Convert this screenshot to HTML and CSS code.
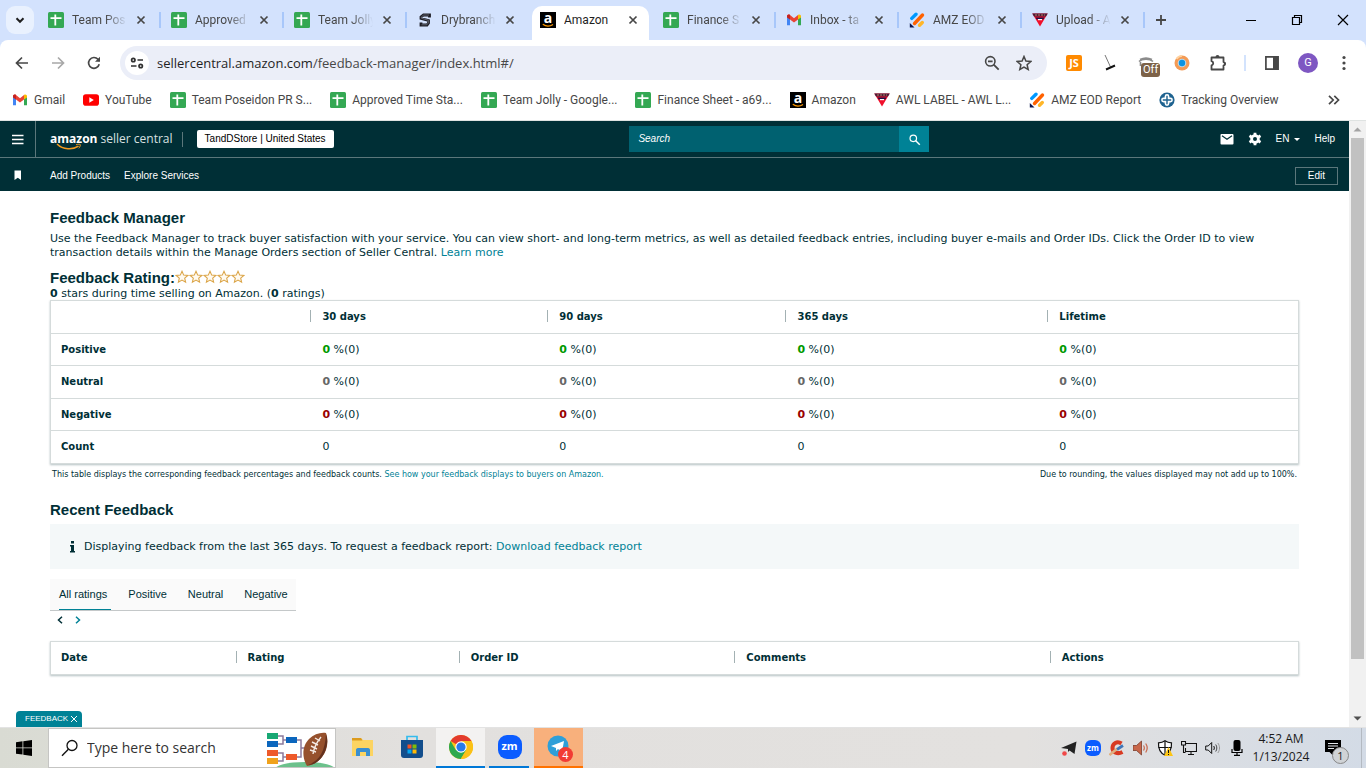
FILE: index.html
```html
<!DOCTYPE html>
<html lang="en">
<head>
  <meta charset="UTF-8" />
  <meta name="viewport" content="width=device-width, initial-scale=1" />
  <title>Amazon</title>
  <link rel="stylesheet" href="styles.css">
</head>
<body>
  <!-- shared icons -->
  <svg class="sprite" aria-hidden="true">
    <symbol id="i-sheet" viewBox="0 0 16 16">
      <rect width="16" height="16" rx="1.5" fill="#34a853"/>
      <path d="M2.5 6.2h11M7.3 2.5v11" stroke="#fff" stroke-width="1.8"/>
    </symbol>
    <symbol id="i-gmail" viewBox="0 0 16 16">
      <path d="M1 4v9.2h3V7z" fill="#4285f4"/>
      <path d="M15 4v9.2h-3V7z" fill="#34a853"/>
      <path d="M1 4.5C1 2.5 3 2 4 3l4 3.2L12 3v4.6L8 10.5 4 7.6z" fill="#ea4335"/>
      <path d="M1 4.2C1 3 2.5 2 4 3v4.6L1 5.4z" fill="#c5221f"/>
      <path d="M12 3c1.5-1 3 0 3 1.3v1.1l-3 2.2z" fill="#fbbc04"/>
    </symbol>
    <symbol id="i-amazon" viewBox="0 0 16 16">
      <rect width="16" height="16" fill="#000"/>
      <text x="8" y="11" text-anchor="middle" class="amazon-a">a</text>
      <path d="M2.8 12.300c3 2.200 7.200 2.200 10.200.2" fill="none" stroke="#f90" stroke-width="1.300"/>
    </symbol>
    <symbol id="i-dry" viewBox="0 0 16 16">
      <path d="M12.500 5.500V3H6.500L4 5v1.500l7.500 2V11L10 13H4v-2.500" fill="none" stroke="#1d1d25" stroke-width="2.800"/>
      <path d="M12 3H6.700L4.300 5v1.200l7 2V11l-1.500 1.800H4.500" fill="none" stroke="#8a8f9c" stroke-width=".6"/>
    </symbol>
    <symbol id="i-jot" viewBox="0 0 16 16">
      <g stroke-width="3.400" stroke-linecap="round">
        <path d="M2.800 6.400 7 2.200" stroke="#0099ff"/>
        <path d="M5.500 11.500 13.500 3" stroke="#ff6100"/>
        <path d="M10.500 13.300 13.300 10.500" stroke="#ffb629"/>
      </g>
      <path d="M.8 11v4.500h4.700z" fill="#0a1551"/>
    </symbol>
    <symbol id="i-awl" viewBox="0 0 16 16">
      <path d="M.3 1.500h15.400L8 14.500z" fill="#f0102c"/>
      <path d="M.3 1.500h15.400L14 4.500H2z" fill="#4b1d3a"/>
      <path d="M3.500 5.500h9l-1 1.800h-7z" fill="#201048"/>
      <path d="M6 7.600h4" stroke="#fff" stroke-width="1.200"/>
      <path d="M3 3h10" stroke="#d9a070" stroke-width=".8" stroke-dasharray="2 1"/>
    </symbol>
    <symbol id="i-x" viewBox="0 0 16 16">
      <path d="m4.500 4.500 7 7m0-7-7 7" fill="none" stroke="currentColor" stroke-width="1.700"/>
    </symbol>
    <symbol id="i-star" viewBox="0 0 14 14">
      <path d="m7 1.300 1.700 3.800 4.100.4-3.100 2.700.9 4L7 10.100l-3.600 2.100.9-4L1.200 5.500l4.100-.4z" fill="#fffaf0" stroke="#dba548" stroke-width="1.100"/>
    </symbol>
    <symbol id="i-search" viewBox="0 0 16 16">
      <circle cx="6.500" cy="6.500" r="4" fill="none" stroke="currentColor" stroke-width="1.500"/>
      <path d="m9.500 9.500 5 5" stroke="currentColor" stroke-width="1.800"/>
    </symbol>
  </svg>

  <!-- browser window -->
  <header class="browser">
    <div class="tabstrip">
      <button class="tab-search" aria-label="Search tabs">
        <svg class="ico" viewBox="0 0 16 16"><path d="m4.500 6.300 3.500 3.500 3.500-3.500" fill="none" stroke="#1f1f1f" stroke-width="2"/></svg>
      </button>
      <div class="tab"><svg class="ico"><use href="#i-sheet"/></svg><span class="tab-title">Team Pos</span><button class="tab-close" aria-label="Close"><svg class="ico"><use href="#i-x"/></svg></button></div>
      <div class="tab"><svg class="ico"><use href="#i-sheet"/></svg><span class="tab-title">Approved</span><button class="tab-close" aria-label="Close"><svg class="ico"><use href="#i-x"/></svg></button></div>
      <div class="tab"><svg class="ico"><use href="#i-sheet"/></svg><span class="tab-title">Team Jolly</span><button class="tab-close" aria-label="Close"><svg class="ico"><use href="#i-x"/></svg></button></div>
      <div class="tab no-line"><svg class="ico"><use href="#i-dry"/></svg><span class="tab-title">Drybranch</span><button class="tab-close" aria-label="Close"><svg class="ico"><use href="#i-x"/></svg></button></div>
      <div class="tab active no-line"><svg class="ico"><use href="#i-amazon"/></svg><span class="tab-title">Amazon</span><button class="tab-close" aria-label="Close"><svg class="ico"><use href="#i-x"/></svg></button></div>
      <div class="tab"><svg class="ico"><use href="#i-sheet"/></svg><span class="tab-title">Finance S</span><button class="tab-close" aria-label="Close"><svg class="ico"><use href="#i-x"/></svg></button></div>
      <div class="tab"><svg class="ico"><use href="#i-gmail"/></svg><span class="tab-title">Inbox - ta</span><button class="tab-close" aria-label="Close"><svg class="ico"><use href="#i-x"/></svg></button></div>
      <div class="tab"><svg class="ico"><use href="#i-jot"/></svg><span class="tab-title">AMZ EOD</span><button class="tab-close" aria-label="Close"><svg class="ico"><use href="#i-x"/></svg></button></div>
      <div class="tab"><svg class="ico"><use href="#i-awl"/></svg><span class="tab-title">Upload - A</span><button class="tab-close" aria-label="Close"><svg class="ico"><use href="#i-x"/></svg></button></div>
      <button class="new-tab" aria-label="New tab"><svg class="ico" viewBox="0 0 16 16"><path d="M8 3v10M3 8h10" stroke="#474747" stroke-width="1.800"/></svg></button>
      <div class="window-buttons">
        <button aria-label="Minimize"><svg class="ico" viewBox="0 0 16 16"><path d="M3 8.500h10" stroke="#000"/></svg></button>
        <button aria-label="Restore"><svg class="ico" viewBox="0 0 16 16"><path d="M3.500 5.500h7v7h-7zM5.500 5.500v-2h7v7h-2" fill="none" stroke="#000" stroke-width="1.200"/></svg></button>
        <button aria-label="Close window"><svg class="ico" viewBox="0 0 16 16"><path d="m3 3 10 10m0-10L3 13" stroke="#000" stroke-width="1.200"/></svg></button>
      </div>
    </div>

    <div class="toolbar">
      <div class="nav-buttons">
        <button aria-label="Back"><svg class="ico" viewBox="0 0 16 16"><path d="M14 8H3M8 2.500 2.500 8 8 13.500" fill="none" stroke="#474747" stroke-width="1.700"/></svg></button>
        <button aria-label="Forward"><svg class="ico" viewBox="0 0 16 16"><path d="M2 8h11M8 2.500 13.500 8 8 13.500" fill="none" stroke="#a8a8a8" stroke-width="1.700"/></svg></button>
        <button aria-label="Reload"><svg class="ico" viewBox="0 0 16 16"><path d="M13.200 9.300A5.400 5.400 0 1 1 12 4.300L13.500 6" fill="none" stroke="#474747" stroke-width="1.700"/><path d="M14 1.700v5H9z" fill="#474747"/></svg></button>
      </div>
      <div class="omnibox">
        <button class="site-info" aria-label="Site information"><svg class="ico" viewBox="0 0 16 16"><g fill="none" stroke="#303030" stroke-width="1.700"><circle cx="4.300" cy="5" r="1.700"/><path d="M8.500 5H14M2 11h5.500"/><circle cx="11.700" cy="11" r="1.700"/></g></svg></button>
        <span class="url">sellercentral.amazon.com<span class="url-path">/feedback-manager/index.html#/</span></span>
        <button aria-label="Zoom"><svg class="ico" viewBox="0 0 16 16"><circle cx="6.300" cy="6.300" r="4.700" fill="none" stroke="#474747" stroke-width="1.600"/><path d="m9.700 9.700 5 5M4 6.300h4.600" stroke="#474747" stroke-width="1.800"/></svg></button>
        <button aria-label="Bookmark this page"><svg class="ico" viewBox="0 0 16 16"><path d="m8 1.500 1.900 4.600 4.900.4-3.700 3.200 1.100 4.800L8 12l-4.200 2.500 1.100-4.800L1.200 6.500l4.900-.4z" fill="none" stroke="#474747" stroke-width="1.500"/></svg></button>
      </div>
      <div class="extensions">
        <button aria-label="Script extension" class="ext-js">JS</button>
        <button aria-label="Cleaner extension"><svg class="ico" viewBox="0 0 16 16"><path d="M3 0 8.500 12" stroke="#777" stroke-width="1"/><path d="m4 14.500 9-4" stroke="#111" stroke-width="2"/></svg></button>
        <button aria-label="Spy extension" class="ext-off"><svg class="ico" viewBox="0 0 16 16"><path d="M1 6.500c3-3 11-3 14 0M2 4.500c4-2 8-2 12 0M2.500 7v4" fill="none" stroke="#8b8b8b" stroke-width="1.600"/></svg><span class="off-badge">Off</span></button>
        <button aria-label="Browser extension"><svg class="ico" viewBox="0 0 16 16"><circle cx="8" cy="8" r="7.500" fill="#f49b55"/><path d="M2.500 4A7 7 0 0 1 8 .8" fill="none" stroke="#ffd2a0" stroke-width="2"/><circle cx="8" cy="8" r="4.300" fill="#b9d8ea"/><circle cx="8" cy="8" r="3.200" fill="#0a93e2"/></svg></button>
        <button aria-label="Extensions" class="ext-all"><svg class="ico ico-18" viewBox="0 0 18 18"><path d="M2.500 3.500h12v4.500a1.800 1.800 0 0 1 0 3.500v4h-12v-4a2.200 2.200 0 0 0 0-4.300z" fill="none" stroke="#474747" stroke-width="1.800" stroke-linejoin="round"/><path d="M6.500 3a2 2 0 0 1 4 0zM15 7.800a2 2 0 0 1 0 4z" fill="#474747"/></svg></button>
        <span class="toolbar-line"></span>
        <button aria-label="Side panel"><svg class="ico" viewBox="0 0 16 16"><path d="M1.900 1.900h12.200v12.200H1.900z" fill="none" stroke="#474747" stroke-width="1.700"/><path d="M9 2h5v12H9z" fill="#474747"/></svg></button>
        <button aria-label="Profile" class="avatar">G</button>
        <button aria-label="Menu"><svg class="ico" viewBox="0 0 16 16"><g fill="#474747"><circle cx="8" cy="2.500" r="1.600"/><circle cx="8" cy="8" r="1.600"/><circle cx="8" cy="13.500" r="1.600"/></g></svg></button>
      </div>
    </div>

    <nav class="bookmarks" aria-label="Bookmarks">
      <a href="#"><svg class="ico"><use href="#i-gmail"/></svg>Gmail</a>
      <a href="#"><svg class="ico" viewBox="0 0 16 16"><rect y="2.300" width="16" height="11.400" rx="2.800" fill="#f00"/><path d="m6.300 5.300 4.500 2.700-4.500 2.700z" fill="#fff"/></svg>YouTube</a>
      <a href="#"><svg class="ico"><use href="#i-sheet"/></svg>Team Poseidon PR S...</a>
      <a href="#"><svg class="ico"><use href="#i-sheet"/></svg>Approved Time Sta...</a>
      <a href="#"><svg class="ico"><use href="#i-sheet"/></svg>Team Jolly - Google...</a>
      <a href="#"><svg class="ico"><use href="#i-sheet"/></svg>Finance Sheet - a69...</a>
      <a href="#"><svg class="ico"><use href="#i-amazon"/></svg>Amazon</a>
      <a href="#"><svg class="ico"><use href="#i-awl"/></svg>AWL LABEL - AWL L...</a>
      <a href="#"><svg class="ico"><use href="#i-jot"/></svg>AMZ EOD Report</a>
      <a href="#"><svg class="ico" viewBox="0 0 16 16"><circle cx="8" cy="8" r="7.600" fill="#1f6390"/><path d="M8 4.500v7M4.500 8h7" stroke="#fff" stroke-width="4.800" stroke-linecap="round"/><path d="M8 3.800v8.400M3.800 8h8.400" stroke="#1f6390" stroke-width="1.400"/></svg>Tracking Overview</a>
      <button class="more-bookmarks" aria-label="More bookmarks"><svg class="ico" viewBox="0 0 16 16"><path d="m3 3.800 4.200 4.200L3 12.200M8.300 3.800l4.200 4.200-4.200 4.200" fill="none" stroke="#474747" stroke-width="1.700"/></svg></button>
    </nav>
  </header>

  <!-- seller central -->
  <div class="viewport">
    <div class="page">
      <header class="site-header">
        <div class="brand">
          <button class="menu-btn" aria-label="Menu"><svg class="ico" viewBox="0 0 16 16"><path d="M2 4.500h11.500M2 8.500h11.500M2 12.500h11.500" stroke="#fff" stroke-width="1.300"/></svg></button>
          <a class="logo" href="#"><b>amazon</b> seller central<svg class="smile" viewBox="0 0 26 8"><path d="M1 1c6 6 16 6 21.500 2.200" fill="none" stroke="#f39b1f" stroke-width="1.500"/><path d="M20 1.800c2-.8 4-.6 4.300-.2.200.5-.3 2.400-1.500 3.700" fill="none" stroke="#f39b1f"/></svg></a>
          <span class="brand-line"></span>
          <button class="store-btn">TandDStore | United States</button>
        </div>
        <form class="search">
          <input type="text" placeholder="Search" aria-label="Search">
          <button type="button" aria-label="Go"><svg class="ico" viewBox="0 0 16 16"><use href="#i-search"/></svg></button>
        </form>
        <div class="account">
          <a href="#" aria-label="Messages"><svg class="ico ico-14" viewBox="0 0 14 14"><rect x=".5" y="2" width="13" height="10.500" rx="1" fill="#fff"/><path d="m2 3.800 5 3.400 5-3.400" fill="none" stroke="#002f36" stroke-width="1.200"/></svg></a>
          <a href="#" aria-label="Settings"><svg class="ico ico-14" viewBox="0 0 14 14"><circle cx="7" cy="7" r="3.400" fill="none" stroke="#fff" stroke-width="2.800"/><path d="M7 .7v2.400M7 10.900v2.400M1.500 3.800l2.200 1.300M10.300 8.900l2.200 1.300M1.500 10.200l2.200-1.300M10.300 5.100l2.200-1.300" stroke="#fff" stroke-width="2.800"/></svg></a>
          <button class="lang">EN<span class="caret"></span></button>
          <a href="#">Help</a>
        </div>
      </header>
      <nav class="subnav" aria-label="Favorites">
        <svg class="ico bookmark" viewBox="0 0 16 16"><path d="M5.500 2.500H12v9.500L8.800 9.800 5.500 12z" fill="#fff"/></svg>
        <a href="#">Add Products</a>
        <a href="#">Explore Services</a>
        <button class="edit-btn">Edit</button>
      </nav>

      <main class="content">
        <h1>Feedback Manager</h1>
        <p class="intro">Use the Feedback Manager to track buyer satisfaction with your service. You can view short- and long-term metrics, as well as detailed feedback entries, including buyer e-mails and Order IDs. Click the Order ID to view transaction details within the Manage Orders section of Seller Central. <a href="#">Learn more</a></p>

        <div class="rating">
          <h2>Feedback Rating:</h2>
          <span class="stars" role="img" aria-label="0 out of 5 stars">
            <svg><use href="#i-star"/></svg><svg><use href="#i-star"/></svg><svg><use href="#i-star"/></svg><svg><use href="#i-star"/></svg><svg><use href="#i-star"/></svg>
          </span>
        </div>
        <p class="rating-text"><b>0</b> stars during time selling on Amazon. (<b>0</b> ratings)</p>

        <table class="card-table summary">
          <colgroup><col class="s1"><col class="s2"><col class="s3"><col class="s4"><col class="s5"></colgroup>
          <thead>
            <tr><td></td><th scope="col">30 days</th><th scope="col">90 days</th><th scope="col">365 days</th><th scope="col">Lifetime</th></tr>
          </thead>
          <tbody>
            <tr class="positive"><th scope="row">Positive</th><td><b>0</b> %(0)</td><td><b>0</b> %(0)</td><td><b>0</b> %(0)</td><td><b>0</b> %(0)</td></tr>
            <tr class="neutral"><th scope="row">Neutral</th><td><b>0</b> %(0)</td><td><b>0</b> %(0)</td><td><b>0</b> %(0)</td><td><b>0</b> %(0)</td></tr>
            <tr class="negative"><th scope="row">Negative</th><td><b>0</b> %(0)</td><td><b>0</b> %(0)</td><td><b>0</b> %(0)</td><td><b>0</b> %(0)</td></tr>
            <tr><th scope="row">Count</th><td>0</td><td>0</td><td>0</td><td>0</td></tr>
          </tbody>
        </table>
        <div class="notes">
          <span>This table displays the corresponding feedback percentages and feedback counts. <a href="#">See how your feedback displays to buyers on Amazon.</a></span>
          <span>Due to rounding, the values displayed may not add up to 100%.</span>
        </div>

        <h2 class="recent-title">Recent Feedback</h2>
        <div class="alert">
          <svg class="info" viewBox="0 0 5 12"><path d="M1 0h3v2.500H1zM0 4h4v6h1v1.500H0V10h1V5.500H0z" fill="#002f36"/></svg>
          <span>Displaying feedback from the last 365 days. To request a feedback report: <a href="#">Download feedback report</a></span>
        </div>

        <div class="filters" role="tablist">
          <button role="tab" aria-selected="true" class="selected">All ratings</button>
          <button role="tab" aria-selected="false">Positive</button>
          <button role="tab" aria-selected="false">Neutral</button>
          <button role="tab" aria-selected="false">Negative</button>
        </div>
        <div class="pager">
          <button aria-label="Previous"><svg viewBox="0 0 6 8"><path d="M5 .8 1.500 4 5 7.200" fill="none" stroke="#002f36" stroke-width="1.500"/></svg></button>
          <button aria-label="Next"><svg viewBox="0 0 6 8"><path d="M1 .8 4.500 4 1 7.200" fill="none" stroke="#008296" stroke-width="1.500"/></svg></button>
        </div>

        <table class="card-table orders">
          <colgroup><col class="o1"><col class="o2"><col class="o3"><col class="o4"><col class="o5"></colgroup>
          <thead>
            <tr><th scope="col">Date</th><th scope="col">Rating</th><th scope="col">Order ID</th><th scope="col">Comments</th><th scope="col">Actions</th></tr>
          </thead>
        </table>
      </main>
      <button class="feedback-tab">FEEDBACK<svg viewBox="0 0 8 8"><path d="m1 1 6 6m0-6L1 7" stroke="#fff"/></svg></button>
    </div>
    <div class="scrollbar" aria-hidden="true">
      <svg viewBox="0 0 17 17"><path d="m4.500 10.500 4-4 4 4z" fill="#a3a3a3"/></svg>
      <div class="track"><div class="thumb"></div></div>
      <svg viewBox="0 0 17 17"><path d="m4.500 6.500 4 4 4-4z" fill="#505050"/></svg>
    </div>
  </div>

  <!-- desktop taskbar -->
  <footer class="taskbar">
    <button class="start" aria-label="Start"><svg class="ico" viewBox="0 0 16 16"><path d="M0 2.200 6.500 1.300v6.200H0zM7.300 1.200 16 0v7.500H7.300zM0 8.300h6.500v6.300L0 13.700zM7.300 8.300H16V16l-8.700-1.200z"/></svg></button>
    <div class="desk-search">
      <svg class="lens" viewBox="0 0 18 18"><circle cx="11" cy="6.500" r="5" fill="none" stroke="#111" stroke-width="1.300"/><path d="M7.400 10.200 1 16.700" stroke="#111" stroke-width="1.400"/></svg>
      <input type="text" placeholder="Type here to search" aria-label="Type here to search">
      <svg class="doodle" viewBox="0 0 68 38">
        <ellipse cx="38" cy="41" rx="31" ry="8" fill="#6cc18c"/>
        <path d="M11 7h5v8h-5M11 24h5v8h-5M16 11h4M16 28h4M30 11h4v17h-4M34 19h5" fill="none" stroke="#8c7a9c" stroke-width="1.500"/>
        <path d="M0 4h11v6H0z" fill="#18a874"/><path d="M0 12h11v6H0z" fill="#0b66bd"/>
        <path d="M0 21h11v6H0z" fill="#ee5a2a"/><path d="M0 29h11v6H0z" fill="#f0a21c"/>
        <path d="M19 8h11v6H19z" fill="#0b66bd"/><path d="M19 25h11v6H19z" fill="#ee5a2a"/>
        <path d="M40 37c-6-10-4-21 2-27 5-5 12-7 17-6 3 9 1 18-4 24-4 5-9 8-15 9z" fill="#96512d"/>
        <path d="M41 36c11-4 17-13 18-31 3 8 0 17-4 23-4 5-8 8-14 8z" fill="#63311e"/>
        <path d="M46 25c1-7 4-12 8-17M44 17l6 3M45 13l6 3M48 9l5 3M43 21l6 2" fill="none" stroke="#f4eae4" stroke-width="1.400"/>
      </svg>
    </div>
    <div class="apps">
      <button aria-label="File Explorer"><svg class="ico ico-24" viewBox="0 0 24 24"><path d="M1 3h9l2 2h10v16H1z" fill="#fcd462"/><path d="M1 3h9l1.500 2.500H1z" fill="#dc9b1d"/><path d="M5 21v-6c0-1 .5-2 2-2h10c1.500 0 2 1 2 2v6h-4v-4H9v4z" fill="#3a8fd0"/></svg></button>
      <button aria-label="Store"><svg class="ico ico-24" viewBox="0 0 24 24"><path d="M7 6V1.500h10V6" fill="none" stroke="#35bbed" stroke-width="1.700"/><path d="M1 5h22v15a3 3 0 0 1-3 3H4a3 3 0 0 1-3-3z" fill="#134e8c"/><path d="M7.500 9.500h4v4h-4z" fill="#f35325"/><path d="M12.500 9.500h4v4h-4z" fill="#81bc06"/><path d="M7.500 14.500h4v4h-4z" fill="#05a6f0"/><path d="M12.500 14.500h4v4h-4z" fill="#ffba08"/></svg></button>
      <button aria-label="Chrome" class="current"><svg class="ico ico-24" viewBox="0 0 24 24"><circle cx="12" cy="12" r="12" fill="#fbc116"/><path d="M12 12 1.600 6A12 12 0 0 1 22.400 6z" fill="#e33b2e"/><path d="M1.600 6a12 12 0 0 0 10.200 18l5.400-9L12 12 6.800 15z" fill="#2da94f"/><path d="M12 6h10.400A12 12 0 0 1 11.800 24l5.400-9z" fill="#fbc116"/><circle cx="12" cy="12" r="5.700" fill="#fff"/><circle cx="12" cy="12" r="4.600" fill="#2a7bea"/></svg></button>
      <button aria-label="Zoom" class="running"><span class="zm">zm</span></button>
      <button aria-label="Telegram" class="alerting"><svg class="ico ico-24" viewBox="0 0 24 24"><circle cx="11" cy="11" r="10.500" fill="#2f9fd8"/><path d="m4 11 13-5-2 11-4-3-2 2v-3z" fill="#fff"/></svg><span class="count">4</span></button>
    </div>
    <div class="tray">
      <svg class="ico" viewBox="0 0 16 16"><path d="M0 8 15.500 1.500 13.500 14 8.500 10.500 7 12V9z" fill="#222"/><circle cx="3.500" cy="13.500" r="2.300" fill="#f04848"/></svg>
      <span class="zm small">zm</span>
      <svg class="ico" viewBox="0 0 16 16"><path d="M12.500 3.500C8 .5 3.500 3.500 3.500 8s5 6.500 10 4" fill="none" stroke="#d83a22" stroke-width="4"/><path d="m.5 15 8-6.500" stroke="#e0b080" stroke-width="2.500"/><path d="m8 9.500 6-4" stroke="#3f75b8" stroke-width="2.800"/></svg>
      <svg class="ico" viewBox="0 0 16 16"><path d="M0 5.500h3.500L8.500 1v14l-5-4.500H0z" fill="#c8674b" stroke="#6e3020" stroke-width=".7"/><path d="M10.500 5.500c1 1.500 1 3.500 0 5M12.700 3.500c2 3 2 6 0 9" fill="none" stroke="#c8674b" stroke-width="1.200"/></svg>
      <svg class="ico" viewBox="0 0 16 16"><path d="M8 .8c2 1.500 4 2 6.500 2 .3 6-1 10-6.500 12.500C2.500 12.800 1.200 8.800 1.500 2.800 4 2.800 6 2.300 8 .8z" fill="#fff" stroke="#111" stroke-width="1.200"/><path d="M8 1v14M1.500 7.500h13" stroke="#111" stroke-width="1.200"/><path d="m11.500 7 4.500 9H7z" fill="#fdc513"/><path d="M11.500 10v3M11.500 14v1" stroke="#111"/></svg>
      <svg class="ico" viewBox="0 0 16 16"><path d="M5 3.500h10.500v8H4.500V8M7 14.500h6M10 11.500v3M.5 1.500h4V5h-4zM2.500 5v7.500h2" fill="none" stroke="#111" stroke-width="1.100"/></svg>
      <svg class="ico" viewBox="0 0 16 16"><path d="M.7 6h2.500l3.500-3.500v11L3.200 10H.7z" fill="none" stroke="#111"/><path d="M8.700 6c.8 1.200.8 2.800 0 4" fill="none" stroke="#111"/><path d="M10.700 4.500c1.500 2 1.500 5 0 7" fill="none" stroke="#444"/><path d="M12.800 3c2.300 3 2.300 7 0 10" fill="none" stroke="#999"/></svg>
      <svg class="ico" viewBox="0 0 16 16"><rect x="4.500" y="0" width="7" height="11" rx="2" fill="#000"/><path d="M3 9v3.500h10V9M8 12.500V15M5 15.300h6" fill="none" stroke="#000" stroke-width="1.200"/></svg>
    </div>
    <div class="clock"><span>4:52 AM</span><span>1/13/2024</span></div>
    <button class="notify" aria-label="Notifications"><svg class="ico" viewBox="0 0 16 16"><path d="M0 0h16v12H8v3.500L4.500 12H0z"/><path d="M3 3.500h10M3 6h10M3 8.500h6" stroke="#e3e6ea"/></svg><span class="notify-count">1</span></button>
  </footer>
</body>
</html>
```
FILE: styles.css
```css
/* Reset and base */
* {
  box-sizing: border-box;
  margin: 0;
  padding: 0;
}
body {
  display: flex;
  flex-direction: column;
  height: 100vh;
  overflow: hidden;
  background: #fff;
  color: #002f36;
  font: 11px/14px "DejaVu Sans", Verdana, sans-serif;
}
a {
  color: #008296;
  text-decoration: none;
}
button {
  border: none;
  background: none;
  color: inherit;
  font: inherit;
  cursor: pointer;
}
svg {
  display: block;
  flex: none;
}
.sprite {
  position: absolute;
  width: 0;
  height: 0;
}
.amazon-a {
  fill: #fff;
  font: bold 14px "Open Sans", sans-serif;
}
.ico {
  width: 16px;
  height: 16px;
}
.ico-14 {
  width: 14px;
  height: 14px;
}
.ico-18 {
  width: 18px;
  height: 18px;
}
.ico-24 {
  width: 24px;
  height: 24px;
}

/* Browser window */
.browser {
  flex: none;
  background: #d3e2fd;
  color: #474747;
  font: 12px/16px Roboto, "Open Sans", sans-serif;
}
.tabstrip {
  display: flex;
  align-items: center;
  height: 40px;
  padding-left: 6px;
}
.tab-search {
  display: flex;
  align-items: center;
  justify-content: center;
  width: 28px;
  height: 28px;
  margin-right: 4px;
  border-radius: 9px;
  background: #e9f1fe;
}
.tab {
  display: flex;
  align-items: center;
  flex: 0 1 123px;
  min-width: 0;
  padding: 0 10px;
  border-right: 2px solid #a8c7fa;
}
.tab.no-line {
  border-right-color: transparent;
}
.tab-title {
  flex: 1;
  min-width: 0;
  margin: 0 6px 0 8px;
  overflow: hidden;
  white-space: nowrap;
  mask-image: linear-gradient(90deg, #000 60%, transparent);
}
.tab-close {
  color: #474747;
}
.tab.active {
  align-self: flex-end;
  flex-basis: 117px;
  height: 34px;
  margin: 0 4px 0 2px;
  padding: 0 8px 6px;
  border-right: none;
  border-radius: 10px 10px 0 0;
  background: #fff;
  color: #1f1f1f;
}
.tab.active .tab-title {
  mask-image: none;
}
.new-tab {
  margin-left: 8px;
}
.window-buttons {
  display: flex;
  gap: 30px;
  margin-left: auto;
  padding-right: 15px;
}
.toolbar {
  display: flex;
  align-items: center;
  height: 46px;
  padding-right: 14px;
  border-radius: 8px 8px 0 0;
  background: #fff;
}
.nav-buttons {
  display: flex;
  gap: 20px;
  padding: 0 18px 0 14px;
}
.omnibox {
  display: flex;
  align-items: center;
  flex: 1;
  gap: 16px;
  height: 34px;
  padding: 0 15px 0 5px;
  border-radius: 17px;
  background: #ebeef8;
}
.site-info {
  display: flex;
  align-items: center;
  justify-content: center;
  width: 24px;
  height: 24px;
  margin-right: -8px;
  border-radius: 50%;
  background: #fff;
}
.url {
  flex: 1;
  color: #1f1f1f;
  font: 13px/18px "Open Sans", "Noto Sans", sans-serif;
}
.url-path {
  color: #474747;
}
.extensions {
  display: flex;
  align-items: center;
  gap: 20px;
  padding-left: 19px;
}
.ext-js {
  width: 16px;
  height: 16px;
  border-radius: 2px;
  background: #ff8a00;
  color: #fff;
  font: bold 11px/16px "Open Sans", sans-serif;
}
.ext-off {
  position: relative;
}
.ext-all {
  margin: 0 -1px;
}
.off-badge {
  position: absolute;
  top: 8px;
  left: 3px;
  padding: 0 2px;
  border-radius: 3px;
  background: #7d6248;
  color: #fff;
  font-size: 11px;
  line-height: 14px;
}
.toolbar-line {
  width: 2px;
  height: 16px;
  margin: 0 -2px;
  background: #d3e3fd;
}
.avatar {
  width: 20px;
  height: 20px;
  margin: 0 -2px;
  border-radius: 50%;
  background: #7e57c2;
  color: #fff;
  font-size: 11px;
  line-height: 20px;
}
.bookmarks {
  display: flex;
  align-items: center;
  gap: 18px;
  height: 34px;
  padding: 0 24px 6px 12px;
  background: #fff;
}
.bookmarks a {
  display: flex;
  align-items: center;
  gap: 6px;
  color: #474747;
  white-space: nowrap;
}
.more-bookmarks {
  margin-left: auto;
}

/* Page area and scrollbar */
.viewport {
  display: flex;
  flex: 1;
  min-height: 0;
  border-top: 1px solid #dfe3e2;
  border-bottom: 1px solid #e3e3e3;
}
.page {
  position: relative;
  flex: 1;
  min-width: 0;
  overflow: hidden;
}
.scrollbar {
  display: flex;
  flex-direction: column;
  width: 17px;
  background: #f1f1f1;
}
.track {
  flex: 1;
  padding: 0 2px;
}
.thumb {
  height: 91%;
  background: #c1c1c1;
}

/* Seller Central header */
.site-header {
  display: grid;
  grid-template-columns: 3fr 300px 2fr;
  align-items: center;
  height: 37px;
  border-bottom: 1px solid #5b777b;
  background: #002f36;
  color: #fff;
  font: 10px/14px "Liberation Sans", Arial, sans-serif;
}
.brand {
  display: flex;
  align-items: center;
  height: 100%;
}
.menu-btn {
  display: flex;
  align-items: center;
  justify-content: center;
  width: 36px;
  height: 100%;
  border-right: 1px solid #5b777b;
}
.logo {
  position: relative;
  margin-left: 14px;
  color: #d9e0e1;
  font: 12px/16px "Open Sans", sans-serif;
  white-space: nowrap;
}
.logo b {
  color: #fff;
}
.smile {
  position: absolute;
  top: 12px;
  left: 6px;
  width: 26px;
  height: 8px;
}
.brand-line {
  width: 1px;
  height: 15px;
  margin: 0 14px 0 9px;
  background: #5b777b;
}
.store-btn {
  padding: 2px 8px;
  border-radius: 2px;
  background: #fff;
  color: #000;
}
.search {
  display: flex;
  height: 26px;
}
.search input {
  flex: 1;
  min-width: 0;
  padding: 0 9px;
  border: none;
  background: #006170;
  color: #fff;
  font: italic 10px/14px "Liberation Sans", Arial, sans-serif;
}
.search input::placeholder {
  color: #fff;
}
.search button {
  display: flex;
  align-items: center;
  justify-content: center;
  width: 30px;
  background: #008296;
}
.search .ico {
  width: 13px;
  height: 13px;
}
.account {
  display: flex;
  align-items: center;
  justify-content: flex-end;
  gap: 14px;
  padding-right: 14px;
}
.account a {
  color: #fff;
}
.lang {
  display: flex;
  align-items: center;
  gap: 5px;
}
.caret {
  border: 3px solid transparent;
  border-top-color: #fff;
  border-bottom: none;
}
.subnav {
  display: flex;
  align-items: center;
  height: 33px;
  padding: 2px 11px 0 9px;
  background: #002f36;
  color: #fff;
  font: 10px/14px "Liberation Sans", Arial, sans-serif;
}
.bookmark {
  margin-right: 25px;
}
.subnav a {
  margin-right: 14px;
  color: #fff;
}
.edit-btn {
  margin-left: auto;
  padding: 1px 12px;
  border: 1px solid #5b777b;
}

/* Content */
.content {
  padding: 18px 50px 0;
}
h1,
h2 {
  font: bold 15px/18px "Liberation Sans", Arial, sans-serif;
}
.intro {
  margin-top: 5px;
}
.rating {
  display: flex;
  align-items: center;
  margin-top: 9px;
}
.stars {
  display: flex;
  padding-bottom: 2px;
}
.stars svg {
  width: 14px;
  height: 14px;
}
.rating-text {
  line-height: 13px;
}
.card-table {
  width: 100%;
  table-layout: fixed;
  border-collapse: separate;
  border-spacing: 0;
  border: 1px solid #d5dbdb;
  box-shadow: 0 1px 2px rgba(0, 47, 54, 0.3);
}
.card-table th,
.card-table td {
  height: 32px;
  padding: 0 10px;
  text-align: left;
  vertical-align: middle;
}
.card-table th {
  font-size: 10px;
}
.card-table thead th + th,
.card-table thead td + th {
  padding-left: 0;
}
.card-table thead th + th::before,
.card-table thead td + th::before {
  content: "";
  display: inline-block;
  width: 1px;
  height: 12px;
  margin-right: 11px;
  background: #a3b1b3;
  vertical-align: -2px;
}
.summary tbody th,
.summary tbody td {
  border-top: 1px solid #d5dbdb;
}
.summary tbody tr:nth-child(even) > * {
  height: 33px;
}
.summary tbody td {
  padding-left: 12px;
}
.s1 { width: 20.8%; }
.s2 { width: 19%; }
.s3 { width: 19.1%; }
.s4 { width: 21%; }
.s5 { width: 20.1%; }
.positive b { color: #090; }
.neutral b { color: #666; }
.negative b { color: #900; }
.notes {
  display: flex;
  justify-content: space-between;
  padding: 5px 2px 0;
  font-size: 8px;
  line-height: 12px;
}
.recent-title {
  margin-top: 20px;
}
.alert {
  display: flex;
  align-items: center;
  gap: 9px;
  height: 45px;
  margin-top: 5px;
  padding-left: 20px;
  background: #f4f8f9;
}
.info {
  width: 5px;
  height: 12px;
}
.filters {
  display: inline-flex;
  gap: 17px;
  margin-top: 10px;
  padding: 0 4px 0 9px;
  border-bottom: 1px solid #c4c8c9;
  background: #fafafa;
  font: 11px/14px "Liberation Sans", Arial, sans-serif;
}
.filters button {
  padding: 8px 4px 8px 0;
  border-bottom: 1px solid transparent;
}
.filters .selected {
  border-bottom-color: #008296;
}
.pager {
  display: flex;
  gap: 12px;
  padding: 5px 7px;
}
.pager svg {
  width: 6px;
  height: 8px;
}
.orders {
  margin-top: 12px;
}
.o1 { width: 14.8%; }
.o2 { width: 17.9%; }
.o3 { width: 22.1%; }
.o4 { width: 25.3%; }
.o5 { width: 19.9%; }
.feedback-tab {
  position: absolute;
  bottom: 0;
  left: 16px;
  display: flex;
  align-items: center;
  gap: 2px;
  height: 16px;
  padding: 0 4px 0 9px;
  border-radius: 4px 4px 0 0;
  background: #008296;
  color: #fff;
  font: 8px/16px "Liberation Sans", Arial, sans-serif;
}
.feedback-tab svg {
  width: 8px;
  height: 8px;
}

/* Taskbar */
.taskbar {
  display: flex;
  align-items: stretch;
  flex: none;
  height: 40px;
  background: linear-gradient(90deg, #d9dbd3, #e2e0de 30%, #e3e1df 75%, #d3dbe6);
  color: #1a1a1a;
  font: 12px/18px "Open Sans", "Noto Sans", sans-serif;
}
.start {
  display: flex;
  align-items: center;
  justify-content: center;
  width: 48px;
}
.desk-search {
  display: flex;
  align-items: center;
  width: 288px;
  padding-left: 12px;
  border: 1px solid #c5c5c3;
  background: #fff;
}
.lens {
  width: 18px;
  height: 18px;
}
.desk-search input {
  flex: 1;
  min-width: 0;
  margin-left: 8px;
  border: none;
  background: none;
  font: 14px/20px "Open Sans", "Noto Sans", sans-serif;
}
.desk-search input::placeholder {
  color: #333;
}
.doodle {
  width: 68px;
  height: 38px;
}
.apps {
  display: flex;
  margin-left: 2px;
}
.apps button {
  position: relative;
  display: flex;
  align-items: center;
  justify-content: center;
  width: 49px;
  border-bottom: 2px solid transparent;
}
.apps .current {
  border-bottom-color: #0078d7;
  background: #f3f2f1;
}
.apps .running::after {
  content: "";
  position: absolute;
  right: 5px;
  bottom: -2px;
  left: 4px;
  height: 2px;
  background: #0078d7;
}
.apps .alerting {
  border-bottom-color: #ff7200;
  background: #f8b07c;
}
.zm {
  display: block;
  width: 24px;
  height: 24px;
  border-radius: 9px;
  background: #0b5cff;
  color: #fff;
  font: bold 11px/22px "Open Sans", sans-serif;
  text-align: center;
}
.zm.small {
  width: 16px;
  height: 16px;
  border-radius: 6px;
  font-size: 8px;
  line-height: 15px;
}
.count {
  position: absolute;
  right: 10px;
  bottom: 4px;
  width: 15px;
  height: 15px;
  border-radius: 50%;
  background: #f23c34;
  color: #fff;
  font-size: 11px;
  line-height: 15px;
}
.tray {
  display: flex;
  align-items: center;
  gap: 8px;
  margin-left: auto;
}
.clock {
  display: flex;
  flex-direction: column;
  align-items: center;
  justify-content: center;
  width: 72px;
}
.notify {
  position: relative;
  display: flex;
  align-items: center;
  justify-content: center;
  width: 45px;
  margin-right: 4px;
  padding-right: 12px;
  border-right: 1px solid #b4bac2;
}
.notify-count {
  position: absolute;
  right: 12px;
  bottom: 4px;
  width: 17px;
  height: 17px;
  border: 1px solid #888;
  border-radius: 50%;
  background: #d0d3d6;
  font-size: 11px;
  line-height: 15px;
}
```
